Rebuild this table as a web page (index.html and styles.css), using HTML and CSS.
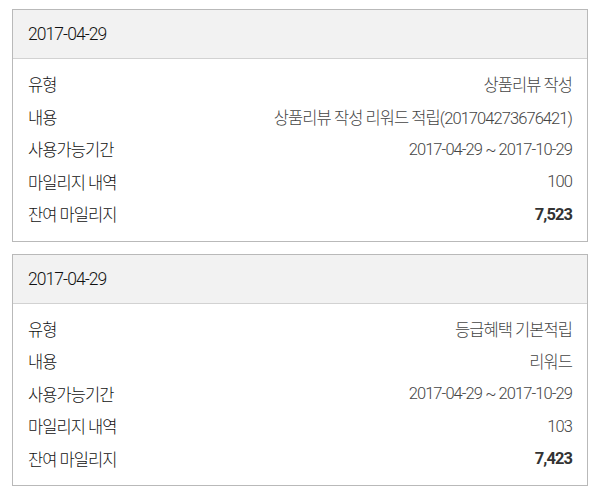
FILE: index.html
```html
<!DOCTYPE html>
<html lang="ko">
<head>
<meta charset="utf-8">
<link rel="stylesheet" href="styles.css">
</head>
<body>
<div class="list">
  <section class="card">
    <div class="card-head">2017-04-29</div>
    <dl class="card-body">
      <div class="row"><dt>유형</dt><dd>상품리뷰 작성</dd></div>
      <div class="row"><dt>내용</dt><dd>상품리뷰 작성 리워드 적립(201704273676421)</dd></div>
      <div class="row"><dt>사용가능기간</dt><dd>2017-04-29 ~ 2017-10-29</dd></div>
      <div class="row"><dt>마일리지 내역</dt><dd>100</dd></div>
      <div class="row"><dt>잔여 마일리지</dt><dd class="strong">7,523</dd></div>
    </dl>
  </section>
  <section class="card">
    <div class="card-head">2017-04-29</div>
    <dl class="card-body">
      <div class="row"><dt>유형</dt><dd>등급혜택 기본적립</dd></div>
      <div class="row"><dt>내용</dt><dd>리워드</dd></div>
      <div class="row"><dt>사용가능기간</dt><dd>2017-04-29 ~ 2017-10-29</dd></div>
      <div class="row"><dt>마일리지 내역</dt><dd>103</dd></div>
      <div class="row"><dt>잔여 마일리지</dt><dd class="strong">7,423</dd></div>
    </dl>
  </section>
</div>
</body>
</html>
```
FILE: styles.css
```css
html, body {
  margin: 0;
  padding: 0;
  background: #fff;
}
body {
  font-family: Roboto, "Noto Sans CJK KR", sans-serif;
  font-weight: 300;
  font-size: 16.5px;
  color: #111;
  letter-spacing: -0.93px;
}
.list {
  display: flex;
  flex-direction: column;
  gap: 12px;
  padding: 9px 12px;
}
.card {
  border: 1px solid #b9b9b9;
  background: #fff;
}
.card-head {
  background: #f2f2f2;
  border-bottom: 1px solid #d2d2d2;
  height: 48px;
  line-height: 48px;
  padding: 0 15px;
  font-size: 17.5px;
  color: #111;
}
.card-body {
  margin: 0;
  padding: 9px 15px 10px;
  display: flex;
  flex-direction: column;
}
.row {
  display: flex;
  justify-content: space-between;
  align-items: center;
  height: 32.5px;
}
.row dt {
  color: #111;
}
.row dd {
  margin: 0;
  color: #444;
}
.row dd.strong {
  font-weight: 700;
  color: #333;
}
```
